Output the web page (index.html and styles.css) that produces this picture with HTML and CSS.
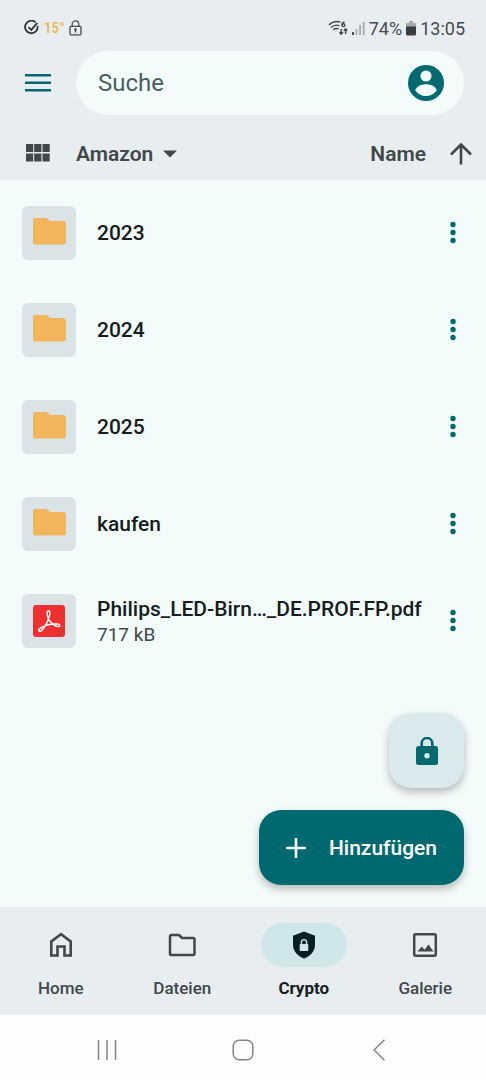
FILE: index.html
```html
<!DOCTYPE html>
<html lang="de">
<head>
<meta charset="utf-8">
<meta name="viewport" content="width=device-width, initial-scale=1">
<title>Amazon</title>
<link rel="stylesheet" href="styles.css">
</head>
<body>
<svg class="defs" aria-hidden="true">
  <symbol id="folder" viewBox="0 0 34 28"><path fill="#f2b55c" d="M3 1h11q1 0 2 1l2 2h13q3 0 3 3v18q0 2.500-2.500 2.500h-29Q1 27.500 1 25V3q0-2 2-2z"/></symbol>
  <symbol id="dots" viewBox="0 0 6 24"><g fill="#006970"><circle cx="3" cy="3.500" r="2.700"/><circle cx="3" cy="11.500" r="2.700"/><circle cx="3" cy="19.500" r="2.700"/></g></symbol>
</svg>
<div class="app">
  <header class="top">
    <div class="status">
      <div class="status-group">
        <svg width="16" height="16" viewBox="0 0 16 16" fill="none" stroke="#30373a" stroke-width="1.8"><path d="M11.500 2.200A6.300 6.300 0 1 0 13.600 6M4.500 7.200l2.800 2.700L13.400 2.800"/></svg>
        <span class="temp">15°</span>
        <svg width="13" height="16" viewBox="0 0 13 16" fill="none" stroke="#454b4e" stroke-width="1.3"><rect x="1" y="6.3" width="11" height="8.5" rx="1"/><path d="M3.200 6V4.200a3.300 3.300 0 0 1 6.600 0V6M6.500 9v3.400"/><circle cx="6.500" cy="9.600" r=".7"/></svg>
      </div>
      <div class="status-group status-right">
        <svg width="20" height="16" viewBox="0 0 20 16" fill="none" stroke="#454b4e" stroke-width="1.4"><path d="M1 5Q6 0 12.500 2.200M3 7.500Q7 3.800 11.500 5.800M5.200 9.700Q8 7.600 10.500 9.200M8 11.500v.2"/><path d="M16.500 2Q14 2.500 14 5.200"/><circle cx="15.400" cy="5.200" r="1.400"/><path d="M13.200 9v5M11.400 12.200l1.800 2 1.800-2M17.600 14V9M15.800 10.800l1.800-2 1.800 2"/></svg>
        <svg width="13" height="14" viewBox="0 0 13 14"><path fill="#454b4e" d="M0 11h2v3H0z"/><path fill="#a5aaad" d="M3.600 8h1.800v6H3.600zM7.200 4H9v10H7.200zM10.800 1h1.800v13h-1.800z"/></svg>
        <span class="percent">74%</span>
        <svg width="10" height="15" viewBox="0 0 10 15"><path fill="#a5aaad" d="M3 0h4v2h2q1 0 1 1v3H0V3q0-1 1-1h2z"/><path fill="#383e41" d="M0 5.500h10V13q0 1.500-1.500 1.500h-7Q0 14.500 0 13z"/></svg>
        <span>13:05</span>
      </div>
    </div>
    <div class="search-row">
      <button class="icon-btn" aria-label="Menü"><svg width="26" height="20" viewBox="0 0 26 20" fill="#006970"><path d="M0 1h26v2.500H0zM0 8.500h26V11H0zM0 16h26v2.500H0z"/></svg></button>
      <div class="search">
        <input type="search" placeholder="Suche" aria-label="Suche">
        <button class="icon-btn" aria-label="Konto"><svg width="36" height="36" viewBox="0 0 36 36"><circle cx="18" cy="18" r="18" fill="#006970"/><circle cx="18" cy="11" r="5.600" fill="#f4fbfb"/><path fill="#f4fbfb" d="M7.200 25.200C8.500 21.200 13.500 19.200 18 19.200s9.500 2 10.800 6C26.300 28.800 22.500 31 18 31S9.700 28.800 7.200 25.200z"/></svg></button>
      </div>
    </div>
    <div class="toolbar">
      <button class="icon-btn" aria-label="Rasteransicht"><svg width="24" height="20" viewBox="0 0 24 20" fill="#3f484a"><path d="M0 1h7.200v8H0zM8.200 1h7.200v8H8.200zM16.500 1h7.200v8h-7.200zM0 10.500h7.200v8H0zM8.200 10.500h7.200v8H8.200zM16.500 10.500h7.200v8h-7.200z"/></svg></button>
      <button class="text-btn">Amazon<svg width="14" height="8" viewBox="0 0 14 8"><path fill="#3f484a" d="M0 .5h14L7 7.500z"/></svg></button>
      <button class="text-btn sort">Name<svg width="22" height="22" viewBox="0 0 22 22" fill="none" stroke="#3f484a" stroke-width="2.600"><path d="M11 21.500V2M1 11.500l10-10 10 10"/></svg></button>
    </div>
  </header>

  <main class="content">
    <ul class="list">
      <li class="row"><span class="thumb"><svg class="folder"><use href="#folder"/></svg></span><span class="name">2023</span><button class="icon-btn more" aria-label="Optionen für 2023"><svg width="6" height="24"><use href="#dots"/></svg></button></li>
      <li class="row"><span class="thumb"><svg class="folder"><use href="#folder"/></svg></span><span class="name">2024</span><button class="icon-btn more" aria-label="Optionen für 2024"><svg width="6" height="24"><use href="#dots"/></svg></button></li>
      <li class="row"><span class="thumb"><svg class="folder"><use href="#folder"/></svg></span><span class="name">2025</span><button class="icon-btn more" aria-label="Optionen für 2025"><svg width="6" height="24"><use href="#dots"/></svg></button></li>
      <li class="row"><span class="thumb"><svg class="folder"><use href="#folder"/></svg></span><span class="name">kaufen</span><button class="icon-btn more" aria-label="Optionen für kaufen"><svg width="6" height="24"><use href="#dots"/></svg></button></li>
      <li class="row"><span class="thumb"><svg width="34" height="34" viewBox="0 0 34 34"><rect x="1" y="1" width="32" height="32" rx="3" fill="#ee3030"/><path fill="none" stroke="#fff" stroke-width="1.500" stroke-linejoin="round" d="M16 7c2.200-1 2.200 3 1 6.200C15.500 18 12 24.500 9.200 26.800c-2 1.500-3.400-.3-1.500-2.200C11 21.500 19 19.500 25 20c4 .4 3.500 3 .5 2.500-4-.7-8.500-5-9.800-9.700C15 10 14.800 7.700 16 7z"/></svg></span><span class="name">Philips_LED-Birn…_DE.PROF.FP.pdf<small>717 kB</small></span><button class="icon-btn more" aria-label="Optionen für die PDF-Datei"><svg width="6" height="24"><use href="#dots"/></svg></button></li>
    </ul>
    <div class="fabs">
      <button class="fab fab-lock" aria-label="Sperren"><svg width="22" height="28" viewBox="0 0 22 28"><path fill="none" stroke="#006970" stroke-width="2.600" d="M5.700 10V6.300a5.300 5.300 0 0 1 10.600 0V10"/><path fill="#006970" fill-rule="evenodd" d="M2.500 9h17Q22 9 22 11.500v14q0 2.500-2.500 2.500h-17Q0 28 0 25.500v-14Q0 9 2.500 9zM11 16a2.700 2.700 0 1 0 0 5.400 2.700 2.700 0 0 0 0-5.400z"/></svg></button>
      <button class="fab fab-add"><svg width="20" height="20" viewBox="0 0 20 20" stroke="#fff" stroke-width="2.600"><path d="M10 0v20M0 10h20"/></svg>Hinzufügen</button>
    </div>
  </main>

  <nav class="tabs">
    <a class="tab" href="#home"><span class="pill"><svg width="24" height="26" viewBox="0 0 24 26" fill="none" stroke="#3f484a" stroke-width="2.600"><path d="M2.300 23.500V9.500L12 2.200l9.700 7.300v14h-6.200v-9h-7v9z"/></svg></span>Home</a>
    <a class="tab" href="#dateien"><span class="pill"><svg width="28" height="24" viewBox="0 0 28 24" fill="none" stroke="#3f484a" stroke-width="2.500" stroke-linejoin="round"><path d="M3.500 2h7.500l3 3h11q1.500 0 1.500 1.500v14q0 1.500-1.500 1.500h-22Q2 22 2 20.500v-17Q2 2 3.500 2z"/></svg></span>Dateien</a>
    <a class="tab active" href="#crypto" aria-current="page"><span class="pill"><svg width="22" height="28" viewBox="0 0 22 28"><path fill="#041f23" d="M11 .5l11 4.300v9c0 6.500-4.500 11.500-11 13.700C4.500 25.300 0 20.300 0 13.800v-9z"/><path fill="#cfe6ea" d="M7.500 13h7q.8 0 .8.800v5.400q0 .8-.8.800h-7q-.8 0-.8-.8v-5.400q0-.8.800-.8z"/><path fill="none" stroke="#cfe6ea" stroke-width="1.400" d="M8.400 13.500v-2.300a2.600 2.600 0 0 1 5.200 0v2.300"/></svg></span>Crypto</a>
    <a class="tab" href="#galerie"><span class="pill"><svg width="26" height="26" viewBox="0 0 26 26"><rect x="2.200" y="2.200" width="21.600" height="21.600" rx="1.500" fill="none" stroke="#3f484a" stroke-width="2.500"/><path fill="#3f484a" d="M5.500 19.500l4.300-5 2.700 3.200 4-5.200 5 7z"/></svg></span>Galerie</a>
  </nav>

  <footer class="system">
    <button class="icon-btn" aria-label="Letzte Apps"><svg width="20" height="20" viewBox="0 0 20 20" stroke="#858585" stroke-width="1.500"><path d="M1.500 0v20M10 0v20M18.500 0v20"/></svg></button>
    <button class="icon-btn" aria-label="Startbildschirm"><svg width="22" height="22" viewBox="0 0 22 22"><rect x="1.200" y="1.200" width="19.600" height="19.600" rx="6" fill="none" stroke="#858585" stroke-width="1.500"/></svg></button>
    <button class="icon-btn" aria-label="Zurück"><svg width="12" height="22" viewBox="0 0 12 22" fill="none" stroke="#858585" stroke-width="1.500"><path d="M11.500 .7L1 11l10.500 10.300"/></svg></button>
  </footer>
</div>
</body>
</html>
```
FILE: styles.css
```css
* { box-sizing: border-box; }

body {
  margin: 0;
  font-family: Roboto, "Noto Sans", sans-serif;
  color: #3f484a;
  background: #f4fbfb;
}

button, input { font: inherit; color: inherit; border: 0; background: none; padding: 0; }
button { cursor: pointer; }
svg { display: block; flex: none; }
.defs { position: absolute; width: 0; height: 0; }

.app { display: flex; flex-direction: column; min-height: 100vh; }

.icon-btn { display: flex; align-items: center; justify-content: center; flex: none; }

.top { background: #e8edf0; }

.status {
  display: flex;
  justify-content: space-between;
  align-items: center;
  height: 51px;
  padding: 5px 21px 0 24px;
  font-size: 18px;
  color: #454b4e;
}
.status-group { display: flex; align-items: center; gap: 4px; }
.temp { color: #efb548; font-size: 15px; font-weight: 500; font-family: "Roboto Condensed", Roboto, sans-serif; }

.search-row { display: flex; align-items: center; padding-right: 22px; }
.search-row > .icon-btn, .toolbar > .icon-btn { width: 76px; height: 54px; }

.search {
  flex: 1;
  min-width: 0;
  display: flex;
  align-items: center;
  height: 64px;
  padding: 0 20px 0 22px;
  border-radius: 32px;
  background: #f4fbfb;
}
.search input { flex: 1; min-width: 0; outline: none; font-size: 24px; line-height: 32px; appearance: none; }
.search input::placeholder { color: #4a5f61; opacity: 1; }

.toolbar {
  display: flex;
  align-items: center;
  height: 65px;
  padding: 12px 14px 0 0;
}
.toolbar > .icon-btn { padding-bottom: 2px; }
.text-btn { display: flex; align-items: center; gap: 10px; font-size: 21px; font-weight: 600; }
.sort { margin-left: auto; gap: 24px; }

.content { position: relative; flex: 1; }
.list { list-style: none; margin: 0; padding: 4px 0 220px; }
.row { display: flex; align-items: center; height: 97px; padding: 0 13px 0 22px; }
.thumb {
  display: flex;
  align-items: center;
  justify-content: center;
  flex: none;
  width: 54px;
  height: 54px;
  border-radius: 6px;
  background: #dae4e6;
}
.folder { width: 34px; height: 28px; margin-bottom: 3px; }
.name {
  flex: 1;
  min-width: 0;
  padding-left: 21px;
  color: #161d1e;
  font-size: 21px;
  line-height: 28px;
  font-weight: 500;
  white-space: nowrap;
}
.name small { display: block; color: #3f484a; font-size: 19px; line-height: 24px; font-weight: 400; }
.more { width: 40px; height: 54px; }

.fabs {
  position: absolute;
  right: 22px;
  bottom: 22px;
  display: flex;
  flex-direction: column;
  align-items: flex-end;
  gap: 22px;
}
.fab {
  display: flex;
  align-items: center;
  justify-content: center;
  height: 75px;
  border-radius: 22px;
  box-shadow: 0 4px 8px rgba(0, 0, 0, .26);
}
.fab-lock { width: 75px; background: #dae9ec; }
.fab-add {
  gap: 23px;
  padding: 0 27px;
  background: #006970;
  color: #fff;
  font-size: 21px;
  font-weight: 500;
}

.tabs {
  display: grid;
  grid-template-columns: repeat(4, 1fr);
  height: 108px;
  padding-top: 16px;
  background: #e8edf0;
}
.tab {
  display: flex;
  flex-direction: column;
  align-items: center;
  gap: 11px;
  color: #3f484a;
  font-size: 17px;
  line-height: 20px;
  font-weight: 500;
  text-decoration: none;
}
.pill {
  display: flex;
  align-items: center;
  justify-content: center;
  width: 86px;
  height: 44px;
  border-radius: 22px;
}
.active { color: #161d1e; font-weight: 700; }
.active .pill { background: #cfe6ea; }

.system {
  display: grid;
  grid-template-columns: repeat(3, 1fr);
  justify-items: center;
  align-items: center;
  height: 65px;
  padding: 4px 8% 0;
  background: #fdfdfd;
}
```
